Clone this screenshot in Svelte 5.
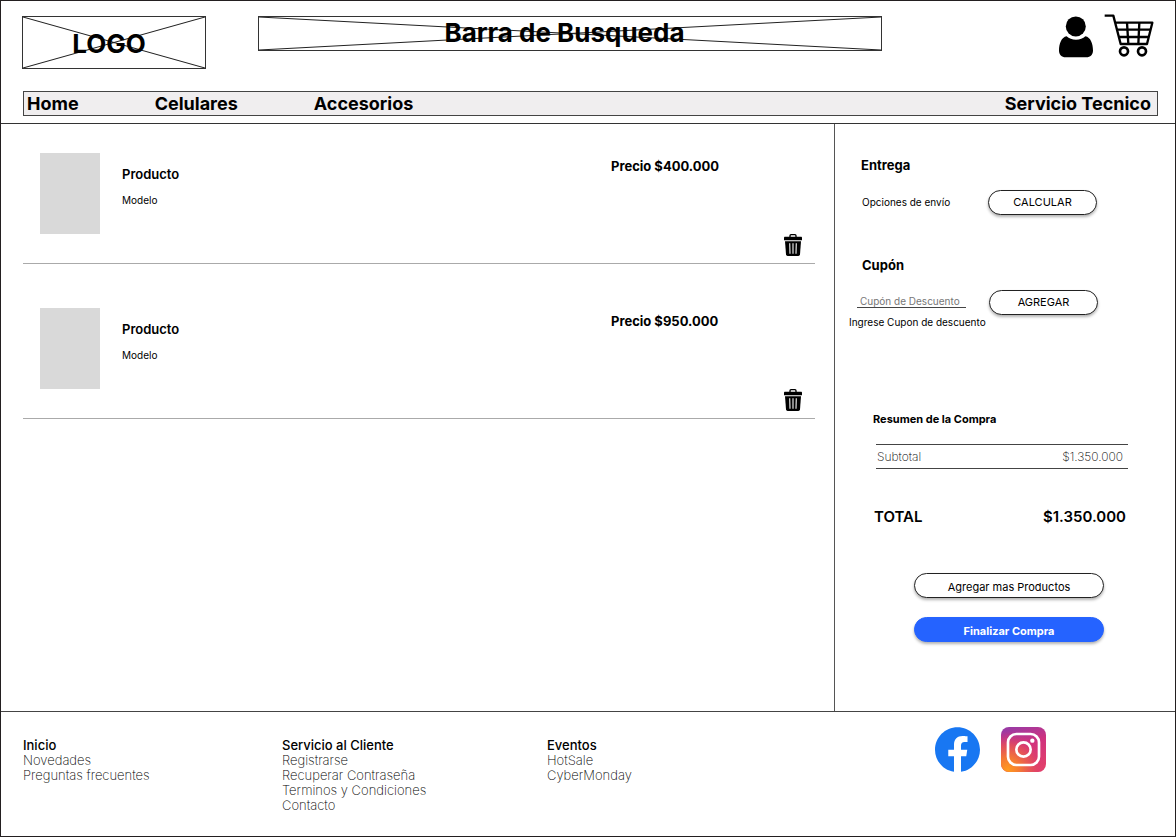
<script>
  const products = [
    { id: 1, name: 'Producto', model: 'Modelo', price: '$400.000' },
    { id: 2, name: 'Producto', model: 'Modelo', price: '$950.000' }
  ];

  const footerColumns = [
    { title: 'Inicio', links: ['Novedades', 'Preguntas frecuentes'] },
    {
      title: 'Servicio al Cliente',
      links: ['Registrarse', 'Recuperar Contraseña', 'Terminos y Condiciones', 'Contacto']
    },
    { title: 'Eventos', links: ['HotSale', 'CyberMonday'] }
  ];
</script>

{#snippet crossedBox()}
  <svg class="cross" viewBox="0 0 100 100" preserveAspectRatio="none" aria-hidden="true">
    <path d="M0 0 100 100M0 100 100 0" />
  </svg>
{/snippet}

<div class="page">
  <header>
    <div class="top">
      <a class="logo wire" href="#inicio">{@render crossedBox()}<span>LOGO</span></a>
      <div class="search wire">
        {@render crossedBox()}
        <input type="text" placeholder="Barra de Busqueda" aria-label="Barra de Busqueda" />
      </div>
      <div class="account">
        <a href="#cuenta" aria-label="Mi cuenta">
          <svg width="34" height="42" viewBox="0 0 34 42">
            <circle cx="16.8" cy="10.4" r="10" />
            <path d="M7.6 20.2C10 22.3 13.200 23.700 17 23.700s7-1.400 9.400-3.500C31.500 21.200 34 27.500 34 34.500c0 4.300-2.600 6.800-6.600 6.800H6.600C2.600 41.300 0 38.800 0 34.500 0 27.500 2.500 21.200 7.600 20.200Z" />
          </svg>
        </a>
        <a href="#carrito" aria-label="Carrito">
          <svg class="cart" width="50" height="42" viewBox="431 48 150 126">
            <path d="M433 47H459L481 132H560L576 68H465" stroke-width="7" />
            <path d="M470 89H571M476 111H566M500 68L504 132M537 68L534 132" stroke-width="7" />
            <circle cx="491" cy="154" r="12" stroke-width="8" />
            <circle cx="545" cy="154" r="12" stroke-width="8" />
          </svg>
        </a>
      </div>
    </div>
    <nav>
      <a href="#home">Home</a>
      <a href="#celulares">Celulares</a>
      <a href="#accesorios">Accesorios</a>
      <a class="last" href="#servicio">Servicio Tecnico</a>
    </nav>
  </header>

  <main>
    <ul class="products">
      {#each products as product (product.id)}
        <li>
          <div class="thumb"></div>
          <div class="info">
            <h2>{product.name}</h2>
            <p>{product.model}</p>
          </div>
          <p class="price">Precio {product.price}</p>
          <button class="remove" type="button" aria-label="Eliminar producto">
            <svg width="18" height="22" viewBox="0 0 54 66">
              <path d="M18 9V5Q18 2 21 2H33Q36 2 36 5V9" fill="none" stroke="#000" stroke-width="4" />
              <path d="M2 8H52Q54 8 54 10V19H0V10Q0 8 2 8Z" />
              <path d="M3 22H51L48 61Q47.500 66 43 66H11Q6.500 66 6 61Z" />
              <path d="M17 28L18 59M27 28V59M37 28L36 59" stroke="#ccc" stroke-width="4" />
            </svg>
          </button>
        </li>
      {/each}
    </ul>

    <aside>
      <section class="delivery">
        <h2>Entrega</h2>
        <div class="row">
          <p>Opciones de envío</p>
          <button class="pill" type="button">CALCULAR</button>
        </div>
      </section>

      <section class="coupon">
        <h2>Cupón</h2>
        <div class="row">
          <input id="coupon" type="text" placeholder="Cupón de Descuento" />
          <button class="pill" type="button">AGREGAR</button>
        </div>
        <label for="coupon">Ingrese Cupon de descuento</label>
      </section>

      <section class="summary">
        <h2>Resumen de la Compra</h2>
        <dl>
          <div class="subtotal"><dt>Subtotal</dt><dd>$1.350.000</dd></div>
          <div class="total"><dt>TOTAL</dt><dd>$1.350.000</dd></div>
        </dl>
        <div class="actions">
          <button class="pill" type="button">Agregar mas Productos</button>
          <button class="pill primary" type="button">Finalizar Compra</button>
        </div>
      </section>
    </aside>
  </main>

  <footer>
    {#each footerColumns as column}
      <div>
        <h2>{column.title}</h2>
        <ul>
          {#each column.links as link}
            <li><a href="#footer">{link}</a></li>
          {/each}
        </ul>
      </div>
    {/each}
    <div class="social">
      <a href="#facebook" aria-label="Facebook">
        <svg width="45" height="45" viewBox="0 0 24 24">
          <path fill="#1877f2" d="M24 12.073c0-6.627-5.373-12-12-12s-12 5.373-12 12c0 5.990 4.388 10.954 10.125 11.854v-8.385H7.078v-3.470h3.047V9.430c0-3.007 1.792-4.669 4.533-4.669 1.312 0 2.686.235 2.686.235v2.953H15.830c-1.491 0-1.956.925-1.956 1.874v2.250h3.328l-.532 3.470h-2.796v8.385C19.612 23.027 24 18.062 24 12.073z" />
        </svg>
      </a>
      <a href="#instagram" aria-label="Instagram">
        <svg width="45" height="45" viewBox="0 0 135 135">
          <defs>
            <linearGradient id="ig-base" x1="0.250" y1="0" x2="0.600" y2="1">
              <stop offset="0" stop-color="#9a3aa4" />
              <stop offset="0.450" stop-color="#d0327e" />
              <stop offset="1" stop-color="#e2406a" />
            </linearGradient>
            <radialGradient id="ig-glow" cx="0.150" cy="0.950" r="0.850">
              <stop offset="0" stop-color="#ff9a1e" />
              <stop offset="0.300" stop-color="#f57a34" />
              <stop offset="0.650" stop-color="#e4505a" stop-opacity="0.850" />
              <stop offset="1" stop-color="#d9307a" stop-opacity="0" />
            </radialGradient>
          </defs>
          <rect width="135" height="135" rx="24" fill="url(#ig-base)" />
          <rect width="135" height="135" rx="24" fill="url(#ig-glow)" />
          <g fill="none" stroke="#fff" stroke-width="8">
            <rect x="21" y="21" width="93" height="93" rx="25" />
            <circle cx="67.500" cy="67.500" r="21.500" />
          </g>
          <circle cx="94" cy="41" r="6.500" fill="#fff" />
        </svg>
      </a>
    </div>
  </footer>
</div>

<style>
  :global(body) {
    margin: 0;
    background: #fff;
  }

  .page,
  .page :global(*) {
    box-sizing: border-box;
  }

  .page {
    display: flex;
    flex-direction: column;
    min-height: 100vh;
    border: 1px solid #231f20;
    font-family: Inter, sans-serif;
    color: #000;
    background: #fff;
  }

  h2,
  p,
  ul,
  dl,
  dd {
    margin: 0;
    padding: 0;
  }

  ul {
    list-style: none;
  }

  a {
    color: inherit;
    text-decoration: none;
  }

  svg {
    display: block;
  }

  button,
  input {
    font-family: inherit;
    color: inherit;
  }

  header {
    padding: 15px 17px 7px 22px;
    border-bottom: 1px solid #333;
  }

  .top {
    display: grid;
    grid-template-columns: 184px minmax(0, 1fr) auto;
    align-items: start;
    padding-right: 4px;
    margin-left: -1px;
  }

  .wire {
    position: relative;
    border: 1px solid #333;
  }

  .cross {
    position: absolute;
    inset: 0;
    width: 100%;
    height: 100%;
  }

  .cross path {
    stroke: #222;
    vector-effect: non-scaling-stroke;
  }

  .logo {
    display: flex;
    align-items: center;
    justify-content: center;
    height: 53px;
    padding: 2px 10px 0 0;
    font-size: 26px;
    font-weight: 700;
  }

  .logo span {
    position: relative;
  }

  .search {
    height: 35px;
    margin: 0 177px 0 52px;
  }

  .search input {
    position: relative;
    display: block;
    width: 100%;
    height: 100%;
    padding: 0 11px 3px 0;
    border: 0;
    background: transparent;
    font-size: 26px;
    font-weight: 700;
    text-align: center;
  }

  .search input::placeholder {
    color: #000;
    opacity: 1;
  }

  .account {
    display: flex;
    gap: 11px;
  }

  .cart {
    overflow: visible;
    fill: none;
    stroke: #000;
    stroke-linejoin: round;
  }

  nav {
    display: flex;
    align-items: center;
    gap: 76px;
    height: 25px;
    margin-top: 22px;
    padding: 0 6px 0 3px;
    border: 1px solid #444;
    background: #f0eeef;
    font-size: 18px;
    font-weight: 700;
    line-height: 23px;
  }

  .last {
    margin-left: auto;
  }

  main {
    flex: 1;
    display: grid;
    grid-template-columns: minmax(0, 1fr) 341px;
  }

  .products {
    display: flex;
    flex-direction: column;
    gap: 15px;
    padding: 0 19px 0 22px;
  }

  .products li {
    display: grid;
    grid-template-columns: 60px minmax(0, 1fr) 109px 82px;
    padding: 29px 13px 7px 17px;
    border-bottom: 1px solid #aaa;
  }

  .thumb {
    height: 81px;
    margin-bottom: 22px;
    background: #d9d9d9;
  }

  .info {
    padding: 13px 22px 0;
  }

  .info h2,
  .price {
    font-size: 13px;
    font-weight: 600;
    line-height: 16px;
    white-space: nowrap;
  }

  .price {
    padding-top: 5px;
    font-weight: 700;
  }

  .info p {
    margin-top: 10px;
    font-size: 10px;
    line-height: 16px;
  }

  .remove {
    place-self: end;
    margin: 0;
    padding: 0;
    border: 0;
    background: none;
  }

  aside {
    padding-top: 33px;
    border-left: 1px solid #555;
  }

  aside h2 {
    font-size: 13px;
    font-weight: 700;
    line-height: 16px;
  }

  .row {
    display: flex;
    margin-top: 17px;
  }

  .pill {
    width: 109px;
    height: 25px;
    padding: 0 0 1px;
    border: 1px solid #222;
    border-radius: 13px;
    background: #fff;
    box-shadow: 0 2px 3px rgba(0, 0, 0, 0.3);
    font-size: 11px;
    line-height: 16px;
  }

  .delivery {
    padding-left: 26px;
  }

  .delivery p {
    width: 127px;
    padding-left: 1px;
    font-size: 10px;
    line-height: 25px;
  }

  .coupon {
    margin-top: 42px;
    padding-left: 14px;
  }

  .coupon h2 {
    padding-left: 13px;
  }

  .coupon .row {
    gap: 23px;
    padding-left: 8px;
  }

  .coupon input {
    width: 109px;
    height: 18px;
    padding: 4px 0 0 3px;
    border: 0;
    border-bottom: 1px solid #444;
    background: transparent;
    font-size: 10px;
  }

  .coupon input::placeholder {
    color: #777;
    opacity: 1;
  }

  .coupon label {
    display: block;
    font-size: 10px;
    line-height: 14px;
  }

  .summary {
    margin-top: 82px;
    padding: 0 47px 0 38px;
  }

  .summary h2 {
    font-size: 11px;
  }

  dl {
    margin-top: 17px;
  }

  dl div {
    display: flex;
    justify-content: space-between;
  }

  .subtotal {
    margin-left: 3px;
    padding: 0 5px 0 1px;
    border: solid #444;
    border-width: 1px 0;
    font-size: 12px;
    font-weight: 200;
    line-height: 23px;
  }

  .total {
    margin-top: 39px;
    padding: 0 2px 0 1px;
    font-size: 15px;
    font-weight: 600;
    line-height: 18px;
  }

  .actions {
    display: flex;
    flex-direction: column;
    gap: 19px;
    width: 190px;
    margin: 47px 0 0 41px;
  }

  .actions .pill {
    width: 100%;
    padding: 2px 0 0;
  }

  .actions .primary {
    border-color: #2563ff;
    background: #2563ff;
    color: #fff;
    font-weight: 700;
  }

  footer {
    display: grid;
    grid-template-columns: 259fr 265fr 388fr auto;
    min-height: 125px;
    padding: 15px 129px 20px 22px;
    border-top: 1px solid #444;
    font-size: 13px;
    line-height: 15px;
  }

  footer > div {
    padding-top: 10px;
  }

  footer h2 {
    font-size: 13px;
    font-weight: 500;
    line-height: 16px;
  }

  footer ul {
    font-weight: 200;
  }

  footer .social {
    display: flex;
    align-items: flex-start;
    gap: 21px;
    padding-top: 0;
  }
</style>
